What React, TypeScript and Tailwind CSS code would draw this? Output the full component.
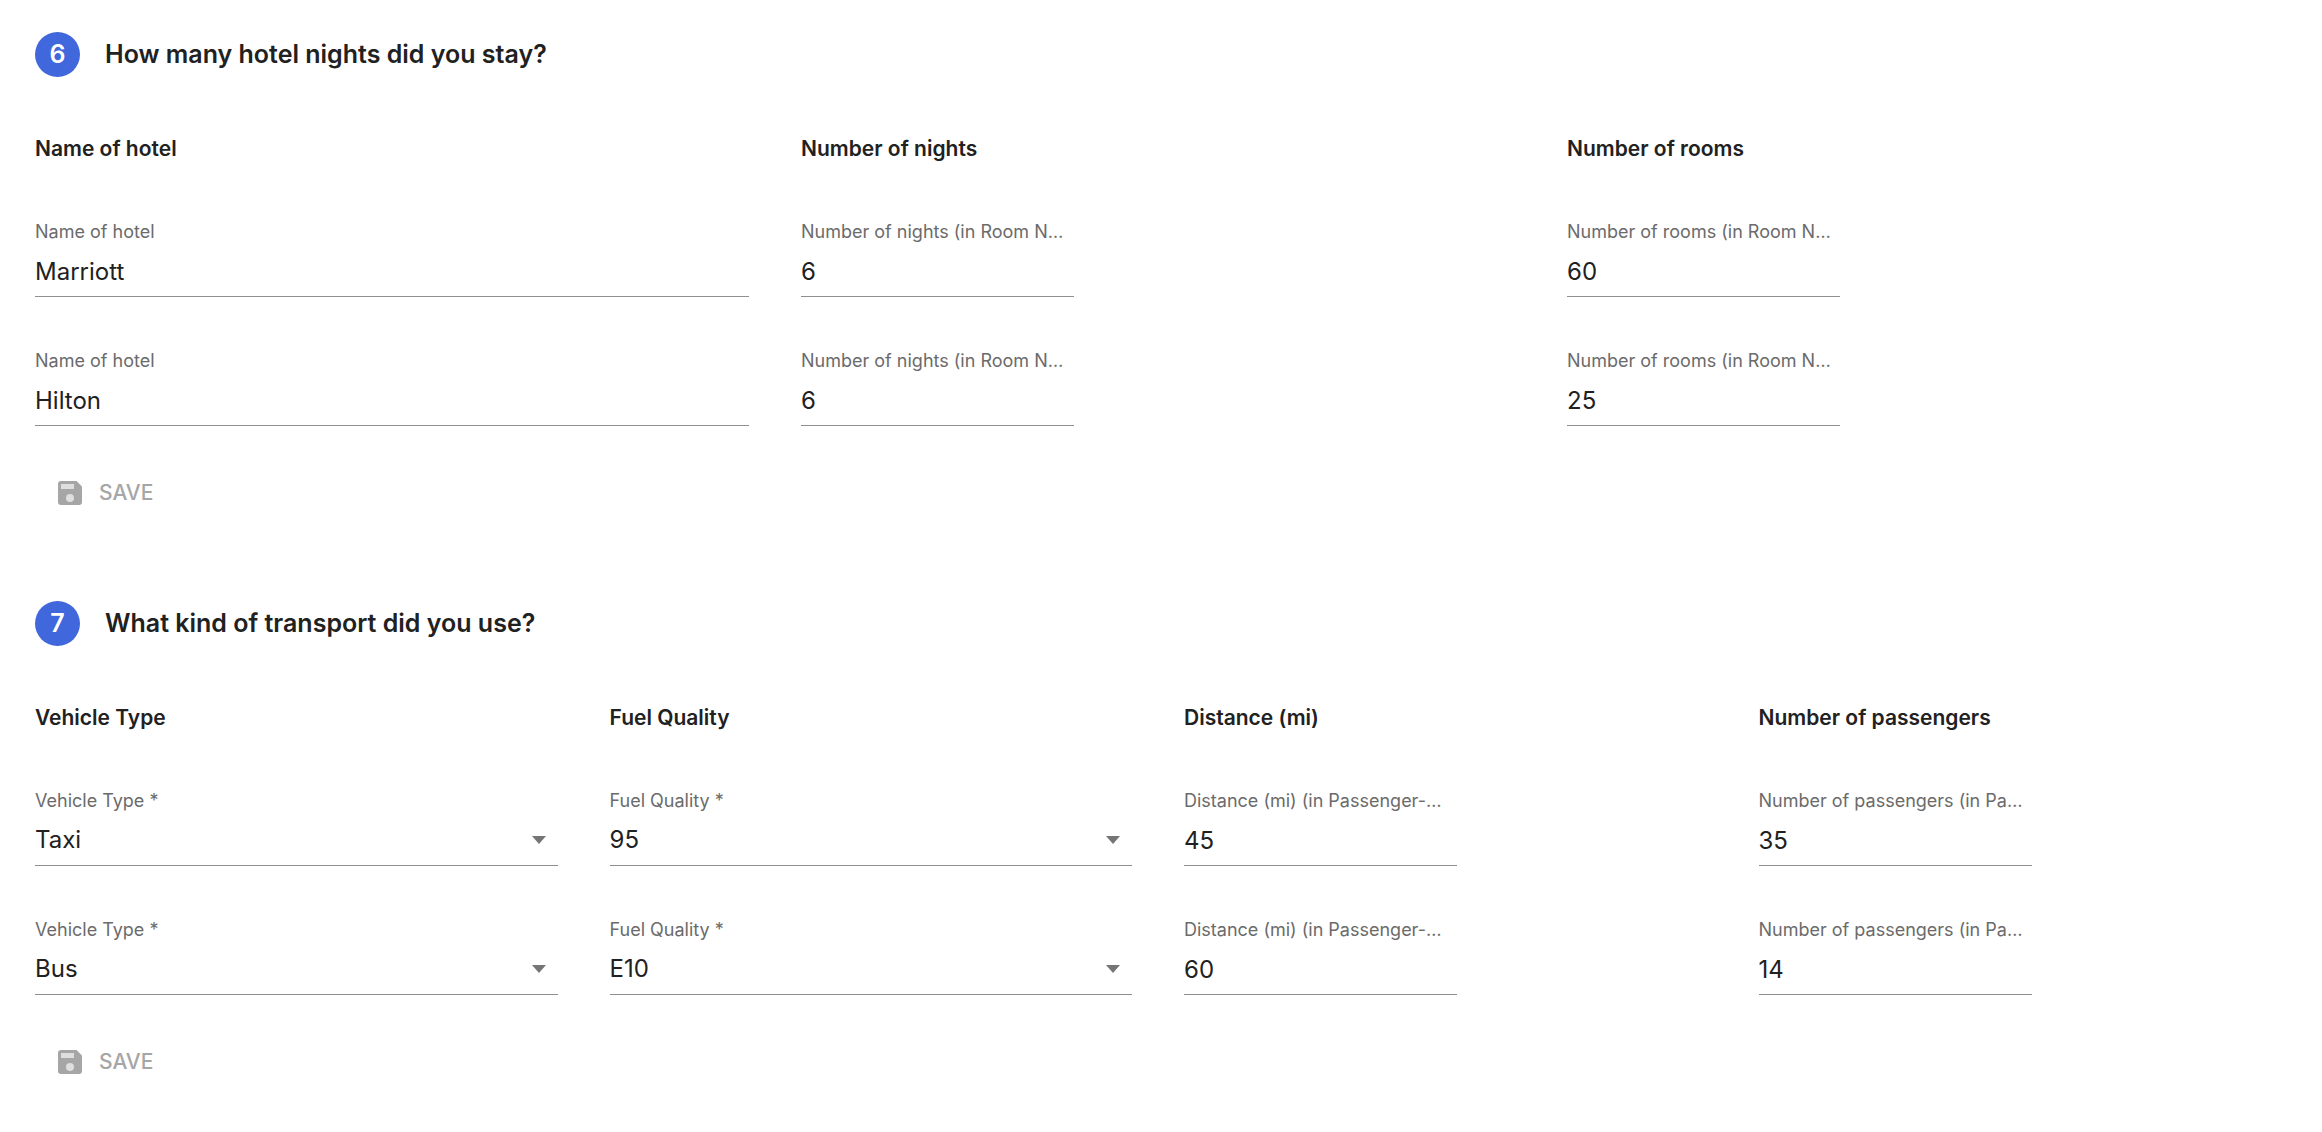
import { useId, useState } from "react";

type FieldSpec = {
  label: string;
  kind: "text" | "number" | "select";
  options?: string[];
};

type Column = { heading: string; field: FieldSpec };

const HOTEL_COLUMNS: Column[] = [
  { heading: "Name of hotel", field: { label: "Name of hotel", kind: "text" } },
  { heading: "Number of nights", field: { label: "Number of nights (in Room N…", kind: "number" } },
  { heading: "Number of rooms", field: { label: "Number of rooms (in Room N…", kind: "number" } },
];

const TRANSPORT_COLUMNS: Column[] = [
  { heading: "Vehicle Type", field: { label: "Vehicle Type *", kind: "select", options: ["Taxi", "Bus"] } },
  { heading: "Fuel Quality", field: { label: "Fuel Quality *", kind: "select", options: ["95", "E10"] } },
  { heading: "Distance (mi)", field: { label: "Distance (mi) (in Passenger-…", kind: "number" } },
  { heading: "Number of passengers", field: { label: "Number of passengers (in Pa…", kind: "number" } },
];

function SaveIcon() {
  return (
    <svg className="size-6" viewBox="0 0 24 24" aria-hidden="true">
      <path d="M3 0h15.5L24 5.500V21a3 3 0 0 1-3 3H3a3 3 0 0 1-3-3V3a3 3 0 0 1 3-3Z" fill="#a6a6a6" />
      <path d="M3 3h13v5H3Z" fill="#dedede" />
      <circle cx="12" cy="17" r="4" fill="#dedede" />
    </svg>
  );
}

function Field({ spec, initial }: { spec: FieldSpec; initial: string }) {
  const id = useId();
  const [value, setValue] = useState(initial);
  const control =
    "h-[53px] w-full appearance-none rounded-none border-b border-[#8f8f8f] bg-transparent pt-0.5 text-2xl text-[#212121] outline-none focus:border-[#4169e1]";

  return (
    <div className={spec.kind === "number" ? "flex w-[273px] max-w-full flex-col" : "flex flex-col"}>
      <label htmlFor={id} className="truncate text-lg leading-6 text-[#6b6b6b]">
        {spec.label}
      </label>
      {spec.kind === "select" ? (
        <div className="relative">
          <select id={id} required value={value} onChange={(e) => setValue(e.target.value)} className={control}>
            {spec.options?.map((option) => (
              <option key={option}>{option}</option>
            ))}
          </select>
          <svg
            className="pointer-events-none absolute top-[23px] right-3 h-2 w-3.5"
            viewBox="0 0 14 8"
            aria-hidden="true"
          >
            <path d="M0 0h14L7 8Z" fill="#757575" />
          </svg>
        </div>
      ) : (
        <input
          id={id}
          type="text"
          inputMode={spec.kind === "number" ? "numeric" : "text"}
          value={value}
          onChange={(e) => setValue(e.target.value)}
          className={control}
        />
      )}
    </div>
  );
}

function Question({
  number,
  title,
  columns,
  rows,
  gridClass,
}: {
  number: number;
  title: string;
  columns: Column[];
  rows: string[][];
  gridClass: string;
}) {
  return (
    <section>
      <header className="flex items-center gap-[25px]">
        <span className="flex size-[45px] shrink-0 items-center justify-center rounded-full bg-[#4067dc] text-[25px] font-semibold text-white">
          {number}
        </span>
        <h2 className="text-[25px] font-semibold">{title}</h2>
      </header>

      <div className="mt-[58px]">
        <div className={gridClass}>
          {columns.map((column) => (
            <h3 key={column.heading} className="text-[21px] leading-7 font-semibold">
              {column.heading}
            </h3>
          ))}
        </div>
      </div>

      <div className="mt-[57px] flex flex-col gap-[52px]">
        {rows.map((row, r) => (
          <div key={r} className={gridClass}>
            {columns.map((column, c) => (
              <Field key={column.heading} spec={column.field} initial={row[c]} />
            ))}
          </div>
        ))}
      </div>

      <button
        type="button"
        disabled
        className="mt-11 flex h-[45px] items-center gap-[17px] px-[23px] text-[21px] font-medium text-[#a6a6a6]"
      >
        <SaveIcon />
        SAVE
      </button>
    </section>
  );
}

export default function App() {
  return (
    <main className="flex min-h-screen flex-col gap-[86px] bg-white pt-8 pr-[41px] pb-12 pl-[35px] font-['Inter',sans-serif] text-[#212121]">
      <Question
        number={6}
        title="How many hotel nights did you stay?"
        columns={HOTEL_COLUMNS}
        rows={[
          ["Marriott", "6", "60"],
          ["Hilton", "6", "25"],
        ]}
        gridClass="grid grid-cols-3 gap-x-[52px]"
      />
      <Question
        number={7}
        title="What kind of transport did you use?"
        columns={TRANSPORT_COLUMNS}
        rows={[
          ["Taxi", "95", "45", "35"],
          ["Bus", "E10", "60", "14"],
        ]}
        gridClass="grid grid-cols-4 gap-x-[52px]"
      />
    </main>
  );
}
